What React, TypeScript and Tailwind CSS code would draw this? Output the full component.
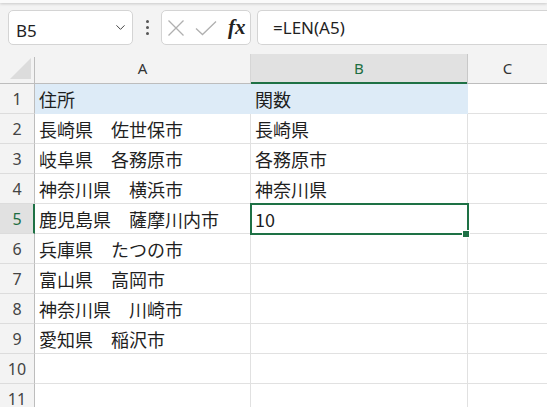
import { ChevronDown } from "lucide-react";

const rows: [string, string][] = [
  ["住所", "関数"],
  ["長崎県　佐世保市", "長崎県"],
  ["岐阜県　各務原市", "各務原市"],
  ["神奈川県　横浜市", "神奈川県"],
  ["鹿児島県　薩摩川内市", "10"],
  ["兵庫県　たつの市", ""],
  ["富山県　高岡市", ""],
  ["神奈川県　川崎市", ""],
  ["愛知県　稲沢市", ""],
  ["", ""],
  ["", ""],
];

const ui = { fontFamily: '"Noto Sans", "Open Sans", sans-serif' };
const cellFont = { fontFamily: '"Noto Sans CJK JP", "Noto Sans", sans-serif' };

export default function App() {
  return (
    <div className="w-[547px] h-[407px] overflow-hidden bg-[#f3f3f3] text-[#1f1f1f]" style={ui}>
      {/* ribbon edge */}
      <div className="h-[3px] bg-[#fafafa] shadow-[0_1px_3px_rgba(0,0,0,0.18)]" />

      {/* formula bar */}
      <div className="flex items-center h-[35px] mt-[7px] pl-2">
        <div className="w-[125px] h-full bg-white border border-[#d4d4d4] rounded-[5px] flex items-center pl-[7px] pr-[4px]">
          <span className="text-[17px] leading-none mt-[6px] flex-1">B5</span>
          <ChevronDown className="w-[15px] h-[15px] text-[#444]" strokeWidth={1.6} />
        </div>
        <div className="w-[28px] flex flex-col items-center gap-[3px]">
          <span className="w-[3px] h-[3px] bg-[#555] rounded-full" />
          <span className="w-[3px] h-[3px] bg-[#555] rounded-full" />
          <span className="w-[3px] h-[3px] bg-[#555] rounded-full" />
        </div>
        <div className="w-[90px] h-full bg-white border border-[#d4d4d4] rounded-[5px] flex items-center pl-[5px]">
          <svg width="18" height="18" viewBox="0 0 18 18" className="text-[#b0b0b0]">
            <path d="M1.5 1.5 L16.5 16.5 M16.5 1.5 L1.5 16.5" stroke="currentColor" strokeWidth="1.3" fill="none" />
          </svg>
          <svg width="22" height="16" viewBox="0 0 22 16" className="ml-[10px] text-[#b0b0b0]">
            <path d="M1 8.5 L7.5 14.5 L21 1.5" stroke="currentColor" strokeWidth="1.3" fill="none" />
          </svg>
          <span
            className="text-[21px] italic font-bold leading-none ml-[11px] text-[#222]"
            style={{ fontFamily: '"Liberation Serif", "DejaVu Serif", serif' }}
          >
            fx
          </span>
        </div>
        <div className="flex-1 h-full ml-[6px] bg-white border border-r-0 border-[#d4d4d4] rounded-l-[5px] flex items-center pl-[15px]">
          <span className="text-[17px] leading-none">=LEN(A5)</span>
        </div>
      </div>

      {/* column headers */}
      <div className="flex h-[30px] mt-[9px] border-b border-[#bdbdbd] text-[15px] text-[#333]">
        <div className="w-[35px] border-r border-[#bdbdbd] relative bg-[#f3f3f3] mt-[3px]">
          <div className="absolute left-[10px] top-[1px] w-0 h-0 border-l-[21px] border-l-transparent border-b-[21px] border-b-[#dcdcdc]" />
        </div>
        <div className="w-[216px] border-r border-[#d6d6d6] flex items-center justify-center">A</div>
        <div className="w-[217px] relative bg-[#e1e1e1] border-r border-[#c8c8c8] flex items-center justify-center text-[#1e6e42]">
          B
          <div className="absolute left-0 right-0 -bottom-px h-[2px] bg-[#1e7145]" />
        </div>
        <div className="flex-1 flex items-center justify-center">C</div>
      </div>

      {/* rows */}
      {rows.map(([a, b], i) => {
        const active = i === 4;
        const head = i === 0;
        return (
          <div key={i} className="flex h-[30px]" style={cellFont}>
            <div
              className={`w-[35px] border-b border-[#dcdcdc] flex items-center justify-center text-[16px] ${
                active
                  ? "bg-[#e1e1e1] text-[#1e6e42] border-r-2 border-r-[#1e7145] pl-[1px]"
                  : "bg-[#f3f3f3] text-[#444] border-r border-r-[#bdbdbd]"
              }`}
              style={ui}
            >
              {i + 1}
            </div>
            <div
              className={`w-[216px] border-b border-r flex items-center pl-[4px] text-[18px] leading-none whitespace-nowrap ${
                head ? "bg-[#ddebf7] border-[#ddebf7]" : "bg-white border-[#e1e1e1]"
              } ${active ? "pl-[3px]" : ""}`}
            >
              <span className="mt-[1px]">{a}</span>
            </div>
            <div
              className={`w-[217px] relative border-b border-r flex items-center pl-[4px] text-[18px] leading-none ${
                head ? "bg-[#ddebf7] border-[#ddebf7]" : "bg-white border-[#e1e1e1]"
              } ${active ? "z-10" : ""}`}
            >
              <span className="mt-[1px]">{b}</span>
              {active && (
                <>
                  <div className="absolute -left-px -top-px w-[219px] h-[32px] border-2 border-[#1e7145]" />
                  <div className="absolute left-[212px] top-[27px] w-[6px] h-[6px] bg-[#1e7145] outline outline-1 outline-white" />
                </>
              )}
            </div>
            <div className="flex-1 bg-white border-b border-[#e1e1e1]" />
          </div>
        );
      })}
    </div>
  );
}
